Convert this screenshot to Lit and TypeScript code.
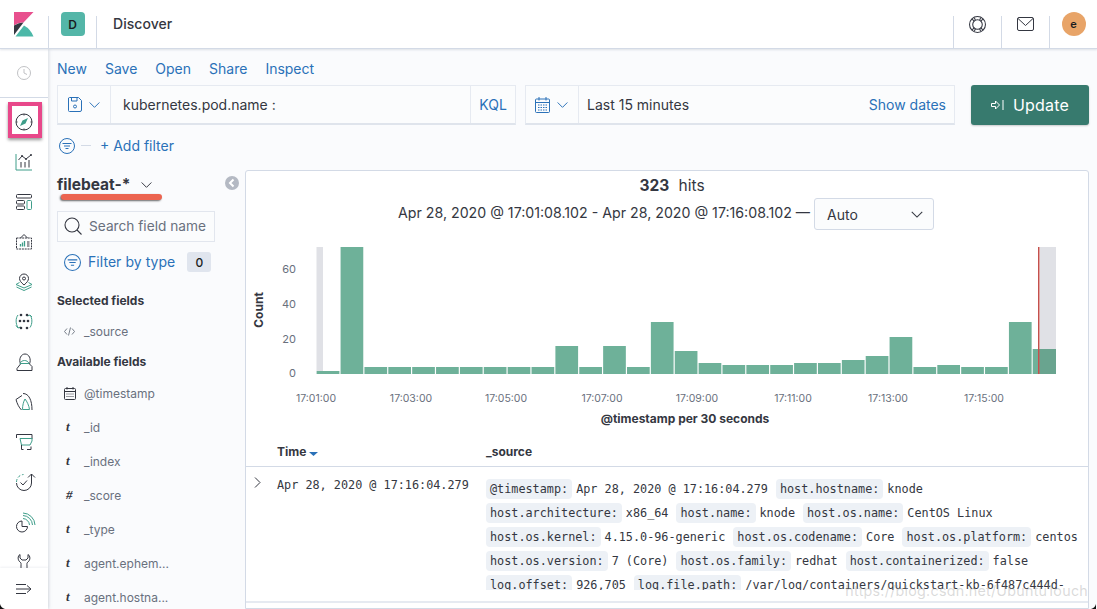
import { LitElement, html, css, svg } from "lit";
import { customElement } from "lit/decorators.js";

const DK = "#343741";
const TL = "#3f9e8a";
const BL = "#2a71b8";

const navIcons = [
  svg`<circle cx="12" cy="12" r="6.500" class="d"/><path d="M12 12V8M12 12l3 1.500" class="d"/>`,
  svg`<circle cx="12" cy="12" r="8" class="d"/><path d="M12 4v1.500M12 18.500V20M4 12h1.500M18.500 12H20" class="d"/><path d="M16 8l-2.500 5.500L8 16l2.500-5.500z" fill="${TL}" stroke="none"/>`,
  svg`<path d="M4 4V20H20" class="t"/><path d="M6.500 10L10 6l4 3 5-4" class="d"/><path d="M9 17.500V12M13 17.500V12M17 17.500V10" class="d"/><g fill="${DK}"><circle cx="10" cy="6" r="1"/><circle cx="14" cy="9" r="1"/><circle cx="19" cy="5" r="1"/></g>`,
  svg`<rect x="4.500" y="4.500" width="15" height="3.500" rx="1" class="d"/><rect x="4.500" y="10.500" width="8" height="3.500" rx="1" class="d"/><rect x="4.500" y="16" width="8" height="3.500" rx="1" class="d"/><rect x="15" y="10.500" width="4.500" height="9" rx="1" class="t"/>`,
  svg`<rect x="4.500" y="8" width="15" height="11" class="d" stroke-dasharray="2 .8"/><path d="M8.500 8L12 4.500 15.500 8" class="d"/><path d="M8.500 16.500v-2.500M10.500 16.500v-4M12.500 16.500V11" class="t" stroke-width="1.300"/><path d="M15 12h2.500M15 14h2.500M15 16h2.500" class="d"/>`,
  svg`<path d="M12 15c-3-2.500-4.500-4.500-4.500-6.500a4.500 4.500 0 0 1 9 0c0 2-1.500 4-4.500 6.500z" class="d"/><circle cx="12" cy="8.500" r="1.500" class="d"/><path d="M7.500 12.500L4 14.500l8 3.500 8-3.500-3.500-2" class="t"/><path d="M4.500 17l7.500 3.500 7.500-3.500" class="t"/>`,
  svg`<path d="M6 5C3.500 8 3.500 14 6 17.500M4 15.500l2 2.500 2.500-1M18 5c2.500 3 2.500 9 0 12.500M20 7l-2-2-2.500 1" class="t"/><g fill="${DK}"><circle cx="9" cy="5" r="1.300"/><circle cx="15" cy="5" r="1.300"/><circle cx="8" cy="11" r="1.300"/><circle cx="12" cy="11" r="1.300"/><circle cx="16" cy="11" r="1.300"/><circle cx="9" cy="18" r="1.300"/><circle cx="15" cy="18" r="1.300"/></g>`,
  svg`<path d="M8.500 14C6.500 9 9 4 13 4s6.500 5 4.500 10l2.500 2.500V20.500H5V18.500z" class="d"/><path d="M8 13.500c1.500-4 7.500-4 9 0z" class="t"/>`,
  svg`<path d="M10 5.500L4 9.500c1 4 3 8 5.500 10.500M11 3.500c6 0 9 7 9 16.500" class="d"/><path d="M10.500 19.500c0-4 1-8 2.500-10.500 2 2.500 4 6.500 4.500 10.500z" class="t"/>`,
  svg`<path d="M4.500 8V4.500H20V9" class="d"/><path d="M8 8.500h12v2.500l-2 4H9.500z" class="t"/><path d="M9.500 15v4.500h2M19 16.500v3h-4" class="d"/>`,
  svg`<path d="M4.500 12a7.500 7.500 0 0 1 7-7.500" class="t" stroke-dasharray="3 1.800"/><path d="M4.500 13a7.500 7.500 0 0 0 15 0V4M16 7.500l3.500-3.500 3.500 3.500M8.500 12.500l2.500 2.500 4-4.500" class="d"/>`,
  svg`<path d="M10 11a5.500 5.500 0 1 0 5.500 5.500H10z" class="d"/><path d="M11 8.500a7 7 0 0 1 6.500 6.500M11 5.500a10 10 0 0 1 9.500 9.500M11 3a12.500 12.500 0 0 1 12 12" class="t"/>`,
  svg`<path d="M8 4.500C5.500 6 5.500 10 8 12c1.500 1 1 2 1 4v8h6v-8c0-2-.5-3 1-4 2.500-2 2.500-6 0-7.500V8l-2 2h-4L8 8z" class="d"/>`,
];

const bars = [3, 127, 7, 7, 7, 7, 7, 7, 7, 7, 28, 7, 28, 7, 52, 23, 11, 9, 9, 9, 11, 11, 14, 18, 37, 7, 9, 7, 7, 52];

const ticks: [string, number][] = [
  ["17:01:00", 316], ["17:03:00", 411], ["17:05:00", 506], ["17:07:00", 602],
  ["17:09:00", 697], ["17:11:00", 793], ["17:13:00", 888], ["17:15:00", 984],
];

const fields: [string, string][] = [
  ["cal", "@timestamp"], ["t", "_id"], ["t", "_index"], ["#", "_score"],
  ["t", "_type"], ["t", "agent.ephem..."], ["t", "agent.hostna..."],
];

const lines: [string, string][][] = [
  [["@timestamp:", "Apr 28, 2020 @ 17:16:04.279"], ["host.hostname:", "knode"]],
  [["host.architecture:", "x86_64"], ["host.name:", "knode"], ["host.os.name:", "CentOS Linux"]],
  [["host.os.kernel:", "4.15.0-96-generic"], ["host.os.codename:", "Core"], ["host.os.platform:", "centos"]],
  [["host.os.version:", "7 (Core)"], ["host.os.family:", "redhat"], ["host.containerized:", "false"]],
  [["log.offset:", "926,705"], ["log.file.path:", "/var/log/containers/quickstart-kb-6f487c444d-"]],
];

const filterIcon = (size: number) => html`<svg width=${size} height=${size} viewBox="0 0 16 16" fill="none" stroke=${BL} stroke-width="1"><circle cx="8" cy="8" r="7.500"/><path d="M3.500 5.500h9M5 8h6M6.500 10.500h3"/></svg>`;
const chevron = (w: number, color: string) => html`<svg width=${w} height=${w} viewBox="0 0 16 16" fill="none" stroke=${color} stroke-width="1.200"><path d="M2 5.500l6 6 6-6"/></svg>`;

@customElement("app-root")
export class AppRoot extends LitElement {
  static styles = css`
    :host { display: block; width: 1097px; height: 609px; overflow: hidden; position: relative; background: #fafbfd; font-family: Inter, "Liberation Sans", sans-serif; color: #343741; }
    * { box-sizing: border-box; }
    header { height: 49px; background: #fff; border-bottom: 1px solid #d3dae6; box-shadow: 0 1px 2px rgba(152,162,179,.3); display: flex; position: relative; z-index: 3; }
    .sep { width: 1px; height: 32px; align-self: flex-end; background: #d3dae6; flex: none; }
    .hcell { width: 47px; display: flex; align-items: center; justify-content: center; flex: none; }
    .logo { width: 48px; }
    .space { width: 24px; height: 24px; border-radius: 4px; background: #54b6a8; font-size: 12px; font-weight: 600; display: flex; align-items: center; justify-content: center; color: #1a1c21; }
    .title { flex: 1; padding-left: 16px; font-size: 14px; line-height: 48px; font-weight: 500; letter-spacing: .05px; }
    .avatar { width: 24px; height: 24px; border-radius: 50%; background: #e8a468; font-size: 11px; font-weight: 600; display: flex; align-items: center; justify-content: center; color: #1a1c21; }
    .body { display: flex; height: 560px; }
    nav { width: 48px; flex: none; background: #fff; box-shadow: 1px 0 3px rgba(152,162,179,.35); display: flex; flex-direction: column; position: relative; z-index: 2; }
    .recent { height: 49px; border-bottom: 1px solid #d3dae6; display: flex; align-items: center; justify-content: center; flex: none; }
    .recent svg { opacity: .3; }
    .navlist { flex: 1; overflow: hidden; padding-top: 4px; }
    .navitem { height: 40px; display: flex; align-items: center; justify-content: center; }
    .dock { height: 41px; flex: none; background: #fff; display: flex; align-items: center; justify-content: center; box-shadow: 0 -1px 2px rgba(152,162,179,.15); }
    .ni { fill: none; stroke-width: 1; }
    .ni .d { stroke: #343741; fill: none; }
    .ni .t { stroke: #3f9e8a; fill: none; }
    main { flex: 1; min-width: 0; display: flex; flex-direction: column; padding-left: 9px; }
    .menu { height: 36px; display: flex; gap: 18px; align-items: center; font-size: 14px; color: #2a71b8; padding-top: 2px; flex: none; }
    .qrow { display: flex; height: 40px; flex: none; }
    .group { display: flex; height: 40px; background: #fbfcfd; border: 1px solid #e6eaf1; border-bottom: 2px solid #dfe4ec; font-size: 14px; }
    .gq { width: 459px; }
    .gd { width: 430px; margin-left: 9px; }
    .gbtn { width: 53px; display: flex; align-items: center; justify-content: center; gap: 6px; border-right: 1px solid #e6eaf1; flex: none; }
    .qinput { display: flex; align-items: center; padding-left: 12px; width: 361px; border-right: 1px solid #e6eaf1; }
    .kql { width: 44px; display: flex; align-items: center; justify-content: center; color: #2a71b8; }
    .dates { flex: 1; display: flex; align-items: center; justify-content: space-between; padding: 0 8px; }
    .link { color: #2a71b8; }
    .update { width: 118px; height: 40px; margin: 0 8px 0 16px; background: #377a6e; color: #fff; border-radius: 3px; display: flex; align-items: center; justify-content: center; gap: 9px; font-size: 16px; font-weight: 400; letter-spacing: .2px; box-shadow: 0 1px 2px rgba(0,0,0,.2); flex: none; }
    .frow { height: 45px; display: flex; align-items: center; flex: none; padding: 0 0 4px 2px; font-size: 14px; color: #2a71b8; }
    .dash { width: 10px; height: 1px; background: #d3dae6; margin: 0 9px 0 6px; }
    .content { display: flex; flex: 1; min-height: 0; }
    .side { width: 188px; flex: none; position: relative; }
    .ptitle { height: 28px; display: flex; align-items: center; gap: 10px; font-size: 15.500px; font-weight: 700; }
    .collapse { position: absolute; left: 168px; top: 4px; }
    .search { width: 158px; height: 31px; margin-top: 13px; border: 1px solid #e2e6ee; background: #fbfcfd; display: flex; align-items: center; gap: 6px; padding: 0 0 2px 5px; font-size: 13.700px; color: #69707d; white-space: nowrap; overflow: hidden; }
    .search svg { flex: none; }
    .fbt { height: 20px; margin-top: 10px; padding-left: 7px; display: flex; align-items: center; gap: 7px; font-size: 14px; color: #2a71b8; letter-spacing: .05px; }
    .fbt span { margin-top: -2px; }
    .badge { margin-left: 5px; width: 24px; height: 20px; border-radius: 3px; background: #e0e5ee; color: #1a1c21; font-size: 12px; font-weight: 500; display: flex; align-items: center; justify-content: center; }
    h3 { margin: 0; font-size: 12px; font-weight: 700; line-height: 16px; }
    .sel { margin-top: 21px; }
    .avail { margin-top: 6px; margin-bottom: 6px; }
    .field { height: 34px; display: flex; align-items: center; font-size: 12px; color: #69707d; }
    .first { margin-top: 5px; }
    .fi { width: 27px; padding-left: 7px; display: flex; align-items: center; flex: none; }
    .tt { font-family: "Liberation Serif", serif; font-style: italic; font-weight: 700; font-size: 13px; color: #343741; padding-left: 2px; }
    .panel { width: 844px; flex: none; background: #fff; border: 1px solid #d3dae6; border-radius: 3px 3px 0 0; display: flex; flex-direction: column; position: relative; }
    .hits { height: 27px; text-align: center; font-size: 15.500px; line-height: 29px; padding-left: 10px; flex: none; }
    .hits b { font-weight: 700; margin-right: 5px; }
    .interval { height: 32px; display: flex; align-items: center; justify-content: center; gap: 4px; padding-right: 2px; font-size: 14.200px; flex: none; }
    .intext { margin-top: -3px; }
    .select { width: 120px; height: 32px; border: 1px solid #d3dae6; border-radius: 3px; background: #fbfcfd; display: flex; align-items: center; justify-content: space-between; padding: 0 9px 0 12px; font-size: 14px; }
    .chart { display: block; flex: none; }
    .chart text { font-family: Inter, "Liberation Sans", sans-serif; }
    .thead { height: 31px; border-bottom: 1px solid #d3dae6; display: flex; align-items: center; font-size: 12px; font-weight: 700; flex: none; }
    .th1 { width: 240px; padding-left: 31px; display: flex; align-items: center; gap: 3px; }
    .caret { margin-top: 5px; }
    .row { height: 136px; border-bottom: 2px solid #e6eaf1; display: flex; flex: none; font-family: "DejaVu Sans Mono", "Liberation Mono", monospace; font-size: 11.800px; color: #343741; }
    .rexp { width: 31px; padding: 9px 0 0 7px; flex: none; }
    .rtime { width: 209px; padding-top: 10px; line-height: 16px; flex: none; }
    .src { flex: 1; height: 123px; padding-top: 10px; overflow: hidden; }
    .ln { height: 24px; line-height: 24px; white-space: nowrap; }
    .k { background: #edf1f6; border-radius: 4px; padding: 3px 4px; margin-right: 4px; color: #343741; }
    .v { margin-right: 8px; }
    .mark { position: absolute; left: 8px; top: 102px; width: 34px; height: 36px; border: 4px solid #e8488a; box-shadow: 0 2px 3px rgba(0,0,0,.4); z-index: 5; }
    .under { position: absolute; left: 61px; top: 194px; width: 101px; height: 6px; border-radius: 3px; background: #ec6450; box-shadow: -1px 1px 2px rgba(0,0,0,.6); z-index: 5; }
    .wm { position: absolute; right: 9px; top: 582px; font-size: 14.300px; color: rgba(150,150,150,.35); letter-spacing: .25px; white-space: nowrap; z-index: 5; }
    .corner { position: absolute; bottom: 0; z-index: 6; display: block; }
    .cl { left: 0; }
    .cr { right: 1px; }
  `;

  render() {
    return html`
      <header>
        <div class="hcell logo">
          <svg width="20" height="25" viewBox="0 0 20 25">
            <path d="M0 0H19.500L9.500 10.500Q4 10.500 0 13.500z" fill="#e8508e"/>
            <path d="M0 13.500Q5 10.500 9.500 10.500L0 23z" fill="#343741"/>
            <path d="M1.500 24.500L10 13.500Q16.500 17 19.500 24.500z" fill="#4cb8a8"/>
          </svg>
        </div>
        <div class="sep"></div>
        <div class="hcell"><div class="space">D</div></div>
        <div class="sep"></div>
        <div class="title">Discover</div>
        <div class="sep"></div>
        <div class="hcell">
          <svg width="17" height="17" viewBox="0 0 16 16" fill="none" stroke=${DK} stroke-width="1"><circle cx="8" cy="8" r="7.500"/><circle cx="8" cy="8" r="4.500"/><path d="M3 3l2 2M13 3l-2 2M3 13l2-2M13 13l-2-2M5 1.500l1 2.500M11 1.500l-1 2.500M5 14.500l1-2.500M11 14.500l-1-2.500"/></svg>
        </div>
        <div class="sep"></div>
        <div class="hcell">
          <svg width="17" height="14" viewBox="0 0 17 14" fill="none" stroke=${DK} stroke-width="1"><rect x=".5" y=".5" width="16" height="13" rx="1.500"/><path d="M1 1.500l7.500 7 7.500-7"/></svg>
        </div>
        <div class="sep"></div>
        <div class="hcell"><div class="avatar">e</div></div>
      </header>
      <div class="body">
        <nav>
          <div class="recent">${this.nav(navIcons[0])}</div>
          <div class="navlist">
            ${navIcons.slice(1).map((i) => html`<div class="navitem">${this.nav(i)}</div>`)}
          </div>
          <div class="dock">
            <svg width="16" height="12" viewBox="0 0 16 12" fill="none" stroke=${DK} stroke-width="1"><path d="M0 1.500h10M0 6h14M0 10.500h10M11 2.500l4 3.500-4 3.500"/></svg>
          </div>
        </nav>
        <main>
          <div class="menu"><span>New</span><span>Save</span><span>Open</span><span>Share</span><span>Inspect</span></div>
          <div class="qrow">
            <div class="group gq">
              <div class="gbtn">
                <svg width="14" height="15" viewBox="0 0 14 15" fill="none" stroke=${BL} stroke-width="1"><path d="M1.500.5h9l3 3v9.500a1.500 1.500 0 0 1-1.500 1.500h-10.500a1 1 0 0 1-1-1v-12.500z"/><path d="M3.500.5v3.500h5.500v-3.500"/><circle cx="7" cy="9.500" r="1.500"/></svg>
                ${chevron(13, BL)}
              </div>
              <div class="qinput">kubernetes.pod.name :</div>
              <div class="kql">KQL</div>
            </div>
            <div class="group gd">
              <div class="gbtn">
                <svg width="15" height="16" viewBox="0 0 15 16" fill="none" stroke=${BL} stroke-width="1"><rect x=".5" y="2" width="14" height="13.500" rx="1"/><path d="M.5 5.500h14M4 0v3.500M11 0v3.500"/><path d="M3 8h9M3 10.500h9M3 13h9" stroke-dasharray="1.500 1"/></svg>
                ${chevron(13, BL)}
              </div>
              <div class="dates"><span>Last 15 minutes</span><span class="link">Show dates</span></div>
            </div>
            <div class="update">
              <svg width="13" height="10" viewBox="0 0 13 10" fill="none" stroke="#fff" stroke-width="1"><path d="M.5 3.500h4v-2.500l4 4-4 4v-2.500h-4zM12 0v10"/></svg>
              <span>Update</span>
            </div>
          </div>
          <div class="frow">${filterIcon(16)}<div class="dash"></div><span>+ Add filter</span></div>
          <div class="content">
            <div class="side">
              <div class="ptitle"><span>filebeat-*</span>${chevron(13, DK)}</div>
              <div class="collapse">
                <svg width="14" height="14" viewBox="0 0 14 14"><circle cx="7" cy="7" r="7" fill="#b4b9c3"/><path d="M8.500 3.500L5 7l3.500 3.500" fill="none" stroke="#fff" stroke-width="2"/></svg>
              </div>
              <div class="search">
                <svg width="20" height="20" viewBox="0 0 20 20" fill="none" stroke=${DK} stroke-width="1.100"><circle cx="9" cy="9" r="7"/><path d="M14 14l4.500 4.500"/></svg>
                <span>Search field name</span>
              </div>
              <div class="fbt">${filterIcon(17)}<span>Filter by type</span><div class="badge">0</div></div>
              <h3 class="sel">Selected fields</h3>
              <div class="field first">
                <div class="fi"><svg width="11" height="9" viewBox="0 0 11 9" fill="none" stroke="#69707d" stroke-width=".9"><path d="M3 1.500L.5 4.500 3 7.500M8 1.500l2.500 3-2.500 3M6.500.5l-2 8"/></svg></div>
                <span>_source</span>
              </div>
              <h3 class="avail">Available fields</h3>
              ${fields.map(([t, n]) => html`
                <div class="field">
                  <div class="fi">
                    ${t === "cal"
                      ? html`<svg width="12" height="13" viewBox="0 0 12 13" fill="none" stroke=${DK} stroke-width="1"><rect x=".5" y="1.500" width="11" height="11" rx="1"/><path d="M.5 4.500h11M3 0v2.500M9 0v2.500"/><path d="M2.500 7h7M2.500 9.500h7" stroke-dasharray="1 1"/></svg>`
                      : html`<span class="tt">${t}</span>`}
                  </div>
                  <span>${n}</span>
                </div>`)}
            </div>
            <div class="panel">
              <div class="hits"><b>323</b> hits</div>
              <div class="interval">
                <span class="intext">Apr 28, 2020 @ 17:01:08.102 - Apr 28, 2020 @ 17:16:08.102 —</span>
                <div class="select"><span>Auto</span>${chevron(14, DK)}</div>
              </div>
              ${this.chart()}
              <div class="thead">
                <div class="th1"><span>Time</span><svg class="caret" width="9" height="5" viewBox="0 0 9 5"><path d="M0 1h9L4.500 5z" fill=${BL}/></svg></div>
                <div>_source</div>
              </div>
              <div class="row">
                <div class="rexp"><svg width="9" height="13" viewBox="0 0 9 13" fill="none" stroke=${DK} stroke-width="1"><path d="M2 1.500l5 5-5 5"/></svg></div>
                <div class="rtime">Apr 28, 2020 @ 17:16:04.279</div>
                <div class="src">
                  ${lines.map((l) => html`<div class="ln">${l.map(([k, v]) => html`<span class="k">${k}</span><span class="v">${v}</span>`)}</div>`)}
                </div>
              </div>
            </div>
          </div>
        </main>
      </div>
      <div class="mark"></div>
      <div class="under"></div>
      <div class="wm">https://blog.csdn.net/Ubuntu1ouch</div>
      <svg class="corner cl" width="5" height="5" viewBox="0 0 5 5"><path d="M0 0Q1 4 5 5H0z" fill="#111"/></svg>
      <svg class="corner cr" width="5" height="5" viewBox="0 0 5 5"><path d="M5 0Q4 4 0 5H5z" fill="#111"/></svg>
    `;
  }

  nav(icon: unknown) {
    return html`<svg class="ni" width="24" height="24" viewBox="0 0 24 24">${icon}</svg>`;
  }

  chart() {
    const base = 374;
    const pitch = 23.87;
    return html`<svg class="chart" width="842" height="206" viewBox="246 230 842 206">
      <rect x="316.500" y="247" width="6.500" height="127" fill="#e0e1e6"/>
      <rect x="1040" y="247" width="16" height="127" fill="#e0e1e6"/>
      ${bars.map((h, i) => svg`<rect x=${316.7 + i * pitch} y=${base - h} width="22.700" height=${h} fill="#6eb199"/>`)}
      <rect x="1032.700" y="349" width="7.300" height="25" fill="#6eb199"/>
      <rect x="1040" y="349" width="16" height="25" fill="#69a48f"/>
      <rect x="1038" y="247" width="1.500" height="127" fill="#c4504c"/>
      ${[["60", 269], ["40", 304], ["20", 339], ["0", 373]].map(([t, y]) => svg`<text x="296" y=${(y as number) + 4} text-anchor="end" font-size="11" fill="#69707d">${t}</text>`)}
      ${ticks.map(([t, x]) => svg`<text x=${x} y="402" text-anchor="middle" font-size="10.500" fill="#69707d">${t}</text>`)}
      <text transform="translate(263 310) rotate(-90)" text-anchor="middle" font-size="12" font-weight="700" fill="#343741">Count</text>
      <text x="685" y="423" text-anchor="middle" font-size="12" font-weight="700" fill="#343741">@timestamp per 30 seconds</text>
    </svg>`;
  }
}
